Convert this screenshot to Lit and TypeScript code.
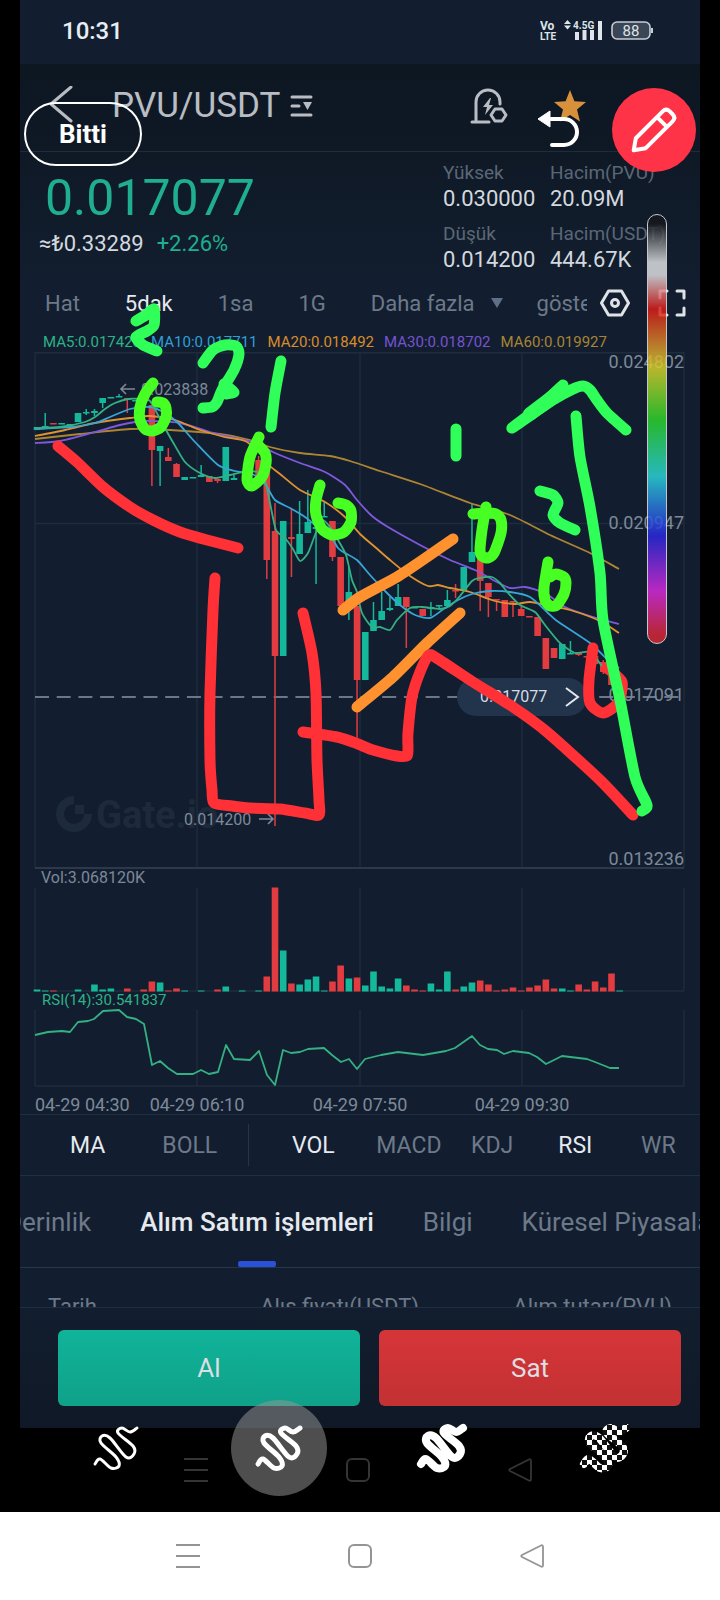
import { LitElement, html, svg, css } from "lit";
import { customElement } from "lit/decorators.js";
import { classMap } from "lit/directives/class-map.js";

type Pt = [number, number];

/** Smooth path through a list of points. */
function smooth(pts: Pt[], k = 0.12): string {
  let d = `M${pts[0][0]} ${pts[0][1]}`;
  for (let i = 0; i < pts.length - 1; i++) {
    const p0 = pts[Math.max(0, i - 1)];
    const p1 = pts[i];
    const p2 = pts[i + 1];
    const p3 = pts[Math.min(pts.length - 1, i + 2)];
    const a = [p1[0] + (p2[0] - p0[0]) * k, p1[1] + (p2[1] - p0[1]) * k];
    const b = [p2[0] - (p3[0] - p1[0]) * k, p2[1] - (p3[1] - p1[1]) * k];
    d += `C${a[0].toFixed(1)} ${a[1].toFixed(1)} ${b[0].toFixed(1)} ${b[1].toFixed(1)} ${p2[0]} ${p2[1]}`;
  }
  return d;
}

const parse = (s: string): Pt[] => s.trim().split(/\s+/).map((p) => p.split(",").map(Number) as Pt);

const candleX = (i: number) => 37 + i * 8.207;

/* index, up or down, body top, body bottom, high, low */
type Candle = [number, "u" | "d", number, number, number, number];
const candles: Candle[] = [
  [0, "u", 427, 430, 427, 430], [1, "u", 426, 428, 413, 428], [2, "d", 423, 424, 423, 424], [3, "u", 423, 424, 423, 424],
  [4, "u", 424, 425, 424, 425], [5, "u", 413, 422, 413, 422], [6, "u", 412, 413, 409, 415], [7, "u", 411, 413, 409, 416],
  [8, "u", 398, 403, 398, 408], [9, "u", 397, 398, 397, 398], [10, "u", 396, 397, 394, 397], [11, "d", 398, 400, 398, 413],
  [12, "u", 400, 401, 400, 401], [13, "u", 400, 401, 400, 401], [14, "d", 405, 450, 405, 486], [15, "u", 446, 451, 446, 486],
  [16, "d", 457, 461, 448, 461], [17, "d", 464, 477, 463, 477], [18, "u", 477, 480, 477, 480], [19, "u", 477, 478, 477, 478],
  [20, "u", 475, 477, 465, 477], [21, "d", 476, 482, 476, 482], [22, "d", 479, 481, 478, 483], [23, "u", 447, 481, 447, 481],
  [24, "u", 478, 480, 475, 480], [26, "u", 478, 479, 478, 479], [27, "d", 460, 478, 456, 478], [28, "d", 465, 560, 456, 579],
  [29, "d", 531, 656, 503, 826], [30, "u", 521, 656, 521, 656], [31, "d", 537, 539, 509, 577], [32, "u", 534, 554, 501, 554],
  [33, "u", 522, 533, 490, 533], [34, "u", 527, 529, 527, 584], [35, "u", 516, 517, 502, 517], [36, "d", 521, 557, 521, 561],
  [37, "d", 557, 606, 557, 606], [38, "u", 592, 607, 567, 620], [39, "d", 606, 680, 606, 738], [40, "u", 632, 680, 632, 680],
  [41, "u", 620, 631, 602, 631], [42, "u", 611, 620, 592, 620], [43, "u", 608, 610, 597, 611], [44, "u", 597, 606, 584, 606],
  [45, "d", 597, 607, 597, 648], [46, "u", 607, 608, 607, 608], [47, "d", 609, 616, 609, 616], [48, "u", 607, 609, 602, 616],
  [49, "u", 605, 606, 605, 609], [50, "u", 600, 606, 590, 606], [51, "d", 590, 591, 584, 598], [52, "u", 567, 591, 567, 591],
  [53, "u", 552, 562, 503, 562], [54, "d", 556, 581, 540, 611], [55, "d", 583, 597, 583, 617], [56, "d", 599, 600, 599, 611],
  [57, "d", 600, 617, 600, 617], [58, "d", 601, 602, 601, 617], [59, "d", 609, 616, 607, 616], [60, "d", 616, 617, 616, 617],
  [61, "d", 617, 636, 617, 636], [62, "d", 638, 669, 638, 669], [63, "d", 648, 658, 648, 658], [64, "u", 644, 659, 644, 659],
  [65, "u", 653, 654, 641, 654], [66, "d", 652, 655, 652, 656], [67, "d", 656, 657, 656, 657], [68, "d", 656, 664, 656, 664],
  [69, "d", 662, 672, 660, 674], [70, "d", 667, 685, 664, 685], [71, "d", 680, 697, 678, 700],
];

/* index, up or down, bar height */
const volumes: [number, "u" | "d", number][] = [
  [0, "u", 2], [1, "u", 1], [2, "d", 1], [5, "u", 2], [7, "u", 7], [8, "u", 2], [9, "u", 3], [11, "d", 3], [13, "d", 2],
  [14, "d", 10], [15, "u", 9], [16, "d", 1], [17, "d", 3], [18, "u", 1], [20, "u", 1], [22, "d", 2], [23, "u", 5],
  [25, "u", 1], [27, "u", 1], [28, "d", 15], [29, "d", 104], [30, "u", 41], [31, "d", 8], [32, "u", 7], [33, "u", 12],
  [34, "u", 15], [35, "u", 1], [36, "d", 10], [37, "d", 26], [38, "u", 13], [39, "d", 14], [40, "u", 6], [41, "u", 20],
  [42, "u", 5], [43, "u", 3], [44, "u", 13], [45, "d", 6], [46, "d", 2], [47, "d", 1], [48, "u", 8], [49, "u", 2],
  [50, "u", 20], [51, "d", 2], [52, "u", 5], [53, "u", 9], [54, "d", 11], [55, "d", 7], [56, "d", 1], [57, "d", 2],
  [58, "d", 4], [59, "d", 1], [60, "d", 4], [61, "d", 6], [62, "d", 12], [63, "d", 3], [64, "u", 3], [65, "u", 1],
  [66, "d", 7], [67, "d", 2], [68, "d", 10], [69, "d", 4], [70, "d", 18], [71, "u", 1],
];

const averages = [
  { cls: "ma60", pts: "35,439 80,434 130,429 170,430 220,434 250,440 270,447 300,453 330,456 350,461 380,471 420,484 470,503 510,515 550,535 590,553 619,569" },
  { cls: "ma30", pts: "35,443 60,441 95,432 120,425 145,421 180,423 210,432 235,438 255,443 275,453 300,463 325,472 345,485 357,500 372,516 388,527 420,545 450,560 475,570 495,581 510,588 525,587 545,593 565,607 590,616 619,624" },
  { cls: "ma20", pts: "35,436 65,430 95,423 130,418 150,416 175,420 200,430 225,437 245,441 262,454 270,466 280,474 300,490 325,502 345,517 360,534 375,547 390,560 410,576 428,586 438,585 450,588 470,592 495,601 515,604 530,602 550,606 570,610 600,621 619,633" },
  { cls: "ma10", pts: "35,429 70,427 95,423 110,417 130,409 150,407 165,413 178,423 195,442 218,465 235,471 252,474 265,484 275,500 290,508 305,517 320,529 330,535 338,548 345,553 357,560 370,575 385,591 400,605 415,615 430,618 445,608 458,600 472,594 490,591 510,592 530,597 547,612 557,621 590,643 608,660 619,668" },
  { cls: "ma5", pts: "35,428 60,427 85,422 95,417 105,409 115,403 128,399 142,399 150,401 158,415 166,430 174,444 185,462 200,473 215,478 230,475 243,472 258,472 265,480 270,503 276,530 285,538 293,549 300,561 308,553 315,535 322,520 330,527 338,540 346,555 352,580 357,592 362,613 372,627 380,627 390,630 397,620 410,608 422,607 440,609 450,606 460,596 472,581 480,578 492,577 500,583 508,593 520,605 535,612 545,625 560,643 575,653 590,652 603,667 619,682" },
];

const rsi =
  "35,1035 48,1032 62,1031 70,1032 78,1022 88,1021 94,1019 103,1011 119,1010 127,1017 136,1019 144,1024 152,1065 160,1061 168,1068 177,1074 193,1074 201,1070 209,1074 218,1072 226,1045 234,1059 250,1060 259,1051 267,1075 275,1085 283,1050 291,1053 300,1052 308,1049 324,1048 332,1055 341,1062 349,1059 357,1069 365,1059 381,1055 398,1052 423,1055 446,1051 455,1048 472,1036 480,1045 488,1049 497,1050 504,1054 513,1051 529,1053 537,1057 546,1064 562,1056 587,1059 595,1062 610,1068 619,1068";

@customElement("price-chart")
class PriceChart extends LitElement {
  static styles = css`
    :host { display: block; }
    svg { display: block; width: 100%; height: auto; font-family: Roboto, sans-serif; }
    .grid { stroke: #1f2c3d; stroke-width: 1.4; fill: none; }
    .frame { stroke: #2b394b; stroke-width: 2; }
    .dash { stroke: #8a94a2; stroke-width: 1.4; stroke-dasharray: 14 7.7; }
    .axis { fill: #7d8999; font-size: 18px; }
    .date { fill: #7d8999; font-size: 18px; }
    .tag { fill: #7d8999; font-size: 16px; }
    .rsi-tag { fill: #2db287; font-size: 15px; }
    .tip { fill: #d6dbe2; }
    .u { fill: #14b89b; stroke: #14b89b; }
    .d { fill: #e23c41; stroke: #e23c41; }
    .bar { stroke: none; }
    .wick { stroke-width: 1.5; }
    .ma { fill: none; stroke-width: 1.8; stroke-linejoin: round; }
    .ma5 { stroke: #34b083; }
    .ma10 { stroke: #37a5d6; }
    .ma20 { stroke: #e0922e; }
    .ma30 { stroke: #8058dd; }
    .ma60 { stroke: #ad8532; }
    .arrow { fill: none; stroke: #7d8999; stroke-width: 1.6; }
    .mark { fill: #1d2a3b; font-size: 38px; font-weight: 700; }
    .ring { fill: none; stroke: #1d2a3b; stroke-width: 8; }
    .pill { fill: #22334c; }
    .chev { fill: none; stroke: #e4e8ee; stroke-width: 2; }
  `;

  render() {
    const cols = [35, 197, 360, 522, 684];
    return html`<svg viewBox="20 351 680 763" role="img" aria-label="PVU/USDT">
      <path class="ring" d="M74 800a14 14 0 1 0 14 14" /><rect x="75" y="805" width="9" height="9" fill="#1d2a3b" />
      <text class="mark" x="96" y="828">Gate.io</text>
      ${cols.map((x) => svg`<path class="grid" d="M${x} 352V868M${x} 888V991M${x} 1010V1086" />`)}
      <path class="grid" d="M35 352.7H684M35 523.5H684M35 991H684M35 1086H684" />
      <path class="grid frame" d="M35 868H684" />
      <path class="dash" d="M35 697H685" />
      ${candles.map(([i, t, top, bottom, high, low]) => svg`
        <path class="wick ${t}" d="M${candleX(i)} ${high}V${low}" />
        <rect class="bar ${t}" x=${candleX(i) - 3.3} y=${top} width="6.6" height=${Math.max(1.5, bottom - top)} />`)}
      ${averages.map((a) => svg`<path class="ma ${a.cls}" d=${smooth(parse(a.pts))} />`)}
      ${volumes.map(([i, t, h]) => svg`<rect class="bar ${t}" x=${candleX(i) - 3.3} y=${991.5 - h} width="6.6" height=${h} />`)}
      <polyline class="ma ma5" points=${rsi} />
      <path class="arrow" d="M135 389H121M126 384l-5 5 5 5M259 819h14M268 814l5 5-5 5" />
      <text class="tag" x="141" y="395">0.023838</text>
      <text class="tag" x="184" y="825">0.014200</text>
      <text class="axis" x="684" y="368" text-anchor="end">0.024802</text>
      <text class="axis" x="684" y="529" text-anchor="end">0.020947</text>
      <text class="axis" x="684" y="701" text-anchor="end">0.017091</text>
      <text class="axis" x="684" y="865" text-anchor="end">0.013236</text>
      <rect class="pill" x="457" y="678" width="130" height="38" rx="19" />
      <text class="tag tip" x="480" y="702">0.017077</text>
      <path class="chev" d="M566 688l12 9-12 9" />
      <text class="tag" x="41" y="883">Vol:3.068120K</text>
      <text class="tag rsi-tag" x="42" y="1005">RSI(14):30.541837</text>
      <text class="date" x="35" y="1111">04-29 04:30</text>
      <text class="date" x="197" y="1111" text-anchor="middle">04-29 06:10</text>
      <text class="date" x="360" y="1111" text-anchor="middle">04-29 07:50</text>
      <text class="date" x="522" y="1111" text-anchor="middle">04-29 09:30</text>
    </svg>`;
  }
}

const strokes: { c: string; w?: number; pts: string }[] = [
  { c: "orange", pts: "453,539 427,557 397,577 360,597 343,610" },
  { c: "orange", pts: "460,613 427,643 393,677 357,707" },
  { c: "red", pts: "58,446 77,462 103,487 130,507 153,520 180,532 207,540 238,548" },
  { c: "red", pts: "215,578 213,610 210,693 210,760 212,790 214,803 232,806 250,808 280,809 305,813 319,815 319,800 317,760 316,693 312,653 303,613" },
  { c: "red", pts: "303,732 337,737 358,744 373,750 397,756 407,756 408,748 408,733 412,697 420,672 429,655 438,659 473,682 513,707 547,732 600,780 633,815" },
  { c: "red", pts: "593,648 589,680 590,703 603,713 618,703 622,682 607,668" },
  { c: "green", pts: "576,416 580,457 590,507 600,573 603,620 620,700 635,777 647,805 642,811" },
  { c: "green", pts: "563,385 538,408 512,428 553,400 573,389 583,386 590,390 597,400 607,413 626,430" },
  { c: "green", w: 12, pts: "559,392 530,414" },
  { c: "green", pts: "456,429 456,456" },
  { c: "green", pts: "540,491 553,495 558,503 553,515 560,523 575,530" },
  { c: "green", pts: "136,321 146,315 154,309 154,325 147,331 136,337 143,345 157,351" },
  { c: "green", pts: "203,363 213,350 225,345 236,346 239,354 234,370 222,390 217,402 212,407 203,408" },
  { c: "green", pts: "224,384 234,392 226,394" },
  { c: "green", pts: "281,361 275,393 271,427" },
  { c: "lime", pts: "153,383 145,394 140,407 140,420 145,429 152,431 161,427 166,417 166,408 163,403 157,402" },
  { c: "lime", pts: "259,437 250,457 247,480 252,486 262,477 266,463 265,453 258,445" },
  { c: "lime", pts: "320,485 316,500 316,515 322,529 332,535 344,532 351,522 351,511 346,505 338,503" },
  { c: "lime", pts: "486,507 482,530 480,550 482,556 488,558 494,553 501,533 501,520 496,514 486,513 473,514" },
  { c: "lime", pts: "548,562 544,587 545,600 550,606 557,605 564,594 566,583 564,577 556,574 550,577" },
];

const scribble = smooth(parse("27,64 32,59 43,68 51,66 48,57 33,43 34,36 42,38 58,57 66,54 65,46 50,33 54,28 62,32 69,28"), 0.17);

@customElement("app-root")
class AppRoot extends LitElement {
  static styles = css`
    :host { display: block; font-family: Roboto, sans-serif; background: #fff; }
    * { box-sizing: border-box; }
    button { font: inherit; color: inherit; background: none; border: 0; padding: 0; cursor: pointer; }
    svg { display: block; }
    .line { fill: none; stroke: currentColor; stroke-width: 3; stroke-linecap: round; stroke-linejoin: round; }

    .phone { position: relative; background: #000; padding: 0 20px; overflow: hidden; }
    .screen { background: #121e2f; color: #d3d8df; }

    .status { display: flex; align-items: center; height: 64px; padding: 0 46px 2px 42px; font-size: 24px; font-weight: 500; color: #e8edf3; }
    .status .time { flex: 1; }
    .head { display: flex; align-items: center; height: 88px; padding: 0 20px 4px 26px; background: linear-gradient(#0d1722, #0f1926); border-bottom: 1px solid #1f2c3d; color: #b9bdc3; }
    .title { display: flex; align-items: center; gap: 10px; flex: 1; margin: 0 0 0 36px; font-size: 35px; font-weight: 400; line-height: 40px; }
    .icons { display: flex; gap: 45px; margin-right: 93px; }

    .stats { display: flex; justify-content: space-between; padding: 9px 20px 7px 19px; background: linear-gradient(#0f1926, #121e2f); }
    .price { margin: 7px 0 0 6px; font-size: 50px; line-height: 60px; color: #1fae90; }
    .sub { display: flex; gap: 13px; font-size: 22px; line-height: 32px; }
    .up { color: #1fae90; }
    .figures { display: grid; grid-template-columns: 107px 130px; row-gap: 9px; margin: 0; }
    .figures dt { font-size: 19px; line-height: 24px; color: #5b6776; white-space: nowrap; }
    .figures dd { margin: 0; font-size: 22px; line-height: 28px; }

    .intervals { display: flex; align-items: center; height: 44px; padding: 0 14px 0 25px; font-size: 22px; color: #6d7989; white-space: nowrap; }
    .intervals button { margin-right: 45px; }
    .intervals .more { display: flex; align-items: center; gap: 16px; margin-right: 34px; }
    .intervals .cut { width: 50px; margin-right: 13px; overflow: hidden; text-align: left; }
    .intervals .icon { margin-right: 28px; color: #dfe3e8; }
    .intervals .icon:last-child { margin: 0; }
    .intervals .on { color: #e6eaef; }
    .legend { display: flex; gap: 10px; padding: 8px 23px 0; font-size: 15px; line-height: 18px; }
    .m5 { color: #2db287; } .m10 { color: #2f9fd6; } .m20 { color: #d98c2b; } .m30 { color: #7653cf; } .m60 { color: #a98434; }

    .indicators { display: flex; align-items: center; height: 62px; padding-left: 50px; border: solid #1f2f40; border-width: 1px 0; font-size: 23px; color: #6d7989; }
    .main { display: flex; gap: 57px; padding-right: 31px; }
    .side { display: grid; grid-template-columns: 13fr 10fr 10fr 10fr 10fr; flex: 1; height: 42px; padding-left: 10px; border-left: 1px solid #263547; }
    .indicators .on { color: #e6eaef; }

    .tabs { display: flex; gap: 49px; height: 92px; overflow: hidden; border-bottom: 1px solid #23364a; font-size: 26px; color: #6d7989; white-space: nowrap; }
    .tabs button { position: relative; flex: none; }
    .tabs button:first-child { margin-left: -15px; }
    .tabs .on { font-weight: 500; color: #e6eaef; }
    .tabs .on::after { content: ""; position: absolute; left: calc(50% - 19px); bottom: 0; width: 38px; height: 6px; border-radius: 2px; background: #2a52d8; }
    .orders { height: 39px; overflow: hidden; padding: 26px 28px 0; }
    table { width: 100%; border-collapse: collapse; table-layout: fixed; font-size: 22px; line-height: 26px; color: #6d7989; white-space: nowrap; }
    th { padding: 0; font-weight: 400; text-align: left; }
    th:first-child { width: 34%; }
    th:last-child { text-align: right; }
    .actions { display: grid; grid-template-columns: 1fr 1fr; gap: 19px; padding: 22px 19px 22px 38px; border-top: 1px solid #1f2f40; background: linear-gradient(#121e2f, #0f1826); }
    .actions button { height: 76px; border-radius: 6px; font-size: 26px; color: #dcdfe2; }
    .buy { background: linear-gradient(#10b499, #0fa189); }
    .sell { background: linear-gradient(#d63538, #c23133); }

    .keys { display: flex; justify-content: space-between; align-items: center; }
    .keys.dim { height: 84px; padding: 0 168px 0 164px; color: #353535; }
    .keys.light { height: 88px; padding: 0 176px; background: #fff; color: #949494; }

    .ink { position: absolute; left: 0; top: 0; width: 100%; pointer-events: none; }
    .ink path { fill: none; stroke-width: 11; stroke-linecap: round; stroke-linejoin: round; }
    .ink .wide { stroke-width: 14; }
    .red { stroke: #ff3136; } .green { stroke: #2fff58; } .lime { stroke: #48ff24; } .orange { stroke: #ff922f; }
    .done { position: absolute; left: 24px; top: 102px; width: 118px; height: 64px; border: 2px solid #fff; border-radius: 32px; font-size: 26px; font-weight: 700; color: #fff; }
    .undo { position: absolute; right: 138px; top: 106px; color: #fff; }
    .pen { position: absolute; right: 24px; top: 88px; width: 84px; height: 84px; border-radius: 50%; background: #ff3347; color: #fff; }
    .hue { position: absolute; right: 53px; top: 214px; width: 20px; height: 430px; margin: 0; appearance: none; writing-mode: vertical-lr; border: 1px solid #e8e8e8; border-radius: 10px;
      background: linear-gradient(#16191d 2%, #dfe1e4 11%, #dfe1e4 14%, #dc1c18 22%, #d8962c 31%, #d6d42c 36%, #2cd62c 48%, #2cd6da 61%, #2a28e0 75%, #da2cdc 88%, #d82838 98%); opacity: 0.84; }
    .hue::-webkit-slider-thumb { appearance: none; width: 1px; height: 1px; opacity: 0; }
    .tools { position: absolute; left: 0; right: 0; bottom: 16px; display: flex; justify-content: space-around; padding: 0 34px; }
    .tools button { width: 96px; height: 96px; border-radius: 50%; color: #fff; }
    .tools .picked { background: rgba(150, 150, 150, 0.52); }
    .tools path { fill: none; stroke: #fff; stroke-linecap: round; stroke-linejoin: round; }
    .tools .w1 { stroke-width: 3; } .tools .w2 { stroke-width: 5; } .tools .w3 { stroke-width: 8; }
    .tools .w4 { stroke-width: 8; stroke: url(#check); }
  `;

  private keyIcons() {
    return html`
      <button aria-label="Menü"><svg width="24" height="26" viewBox="0 0 24 26"><path d="M0 2h24M0 13h24M0 24h24" fill="none" stroke="currentColor" stroke-width="2" /></svg></button>
      <button aria-label="Ana ekran"><svg width="24" height="26" viewBox="0 0 24 26"><rect x="1" y="2" width="22" height="22" rx="5" fill="none" stroke="currentColor" stroke-width="2" /></svg></button>
      <button aria-label="Geri"><svg width="24" height="26" viewBox="0 0 24 26"><path d="M21 2.500Q23 1.500 23 4V22Q23 24.500 21 23.500L2 14Q0.500 13 2 12Z" fill="none" stroke="currentColor" stroke-width="1.800" /></svg></button>`;
  }

  render() {
    const tools = ["w1", "w2", "w3", "w4"];
    const names = ["İnce", "Orta", "Kalın", "Mozaik"];
    return html`
      <div class="phone">
        <main class="screen">
          <div class="status">
            <span class="time">10:31</span>
            <svg width="114" height="24" viewBox="540 19 114 24" font-family="Roboto, sans-serif" font-weight="700" fill="#dfe4ea">
              <text x="540" y="30" font-size="12">Vo</text>
              <text x="540" y="40" font-size="10">LTE</text>
              <path d="M564 24l3.500-4 3.500 4zM564 25.500l3.500 4 3.500-4z" />
              <text x="573" y="29" font-size="10">4.5G</text>
              <path d="M575 32h4v8h-4zM582.500 30h4v10h-4zM590 30h4v10h-4zM598 21h4v19h-4z" />
              <rect x="612" y="22" width="38" height="17" rx="5" fill="#3a4656" stroke="#c6ccd4" stroke-width="1.600" />
              <path d="M652 28v5" stroke="#c6ccd4" stroke-width="2" />
              <text x="631" y="36" font-size="15" font-weight="400" text-anchor="middle">88</text>
            </svg>
          </div>
          <header class="head">
            <button aria-label="Geri"><svg width="30" height="40" viewBox="0 0 30 40"><path class="line" d="M25 1L5 18l20 17" /></svg></button>
            <h1 class="title">PVU/USDT
              <svg width="23" height="24" viewBox="0 0 23 24"><path class="line" d="M2 3h19M2 12h7M2 21h19" /><path d="M13 8h9l-4.500 8z" fill="currentColor" /></svg>
            </h1>
            <div class="icons">
              <button aria-label="Alarm"><svg width="38" height="40" viewBox="0 0 38 40"><path class="line" d="M2 36h17M6 36V16a12 12 0 0 1 24 0v2" /><path d="M20 12l-7 9h4l-2 8 8-10h-4l2-7z" fill="currentColor" /><path class="line" d="M25 23h7l4 6-4 6h-7l-4-6z" /></svg></button>
              <button aria-label="Favori"><svg width="34" height="34" viewBox="0 0 34 34"><path fill="#d8903a" d="M17 1l4.400 11.200 11.600.7-9 7.600 3 11.900-10-6.500-10 6.500 3-11.900-9-7.600 11.600-.7z" /></svg></button>
            </div>
          </header>
          <section class="stats">
            <div>
              <div class="price">0.017077</div>
              <div class="sub"><span>≈₺0.33289</span><span class="up">+2.26%</span></div>
            </div>
            <dl class="figures">
              <div><dt>Yüksek</dt><dd>0.030000</dd></div>
              <div><dt>Hacim(PVU)</dt><dd>20.09M</dd></div>
              <div><dt>Düşük</dt><dd>0.014200</dd></div>
              <div><dt>Hacim(USDT)</dt><dd>444.67K</dd></div>
            </dl>
          </section>
          <nav class="intervals">
            <button>Hat</button><button class="on">5dak</button><button>1sa</button><button>1G</button>
            <button class="more">Daha fazla<svg width="12" height="10"><path d="M0 0h12L6 10z" fill="#5f6f87" /></svg></button>
            <button class="cut">göstergeler</button>
            <button class="icon" aria-label="Ayarlar"><svg width="30" height="28" viewBox="0 0 30 28"><path class="line" d="M8.500 2h13l7 12-7 12h-13l-7-12z" /><circle class="line" cx="15" cy="14" r="3.500" /></svg></button>
            <button class="icon" aria-label="Tam ekran"><svg width="28" height="28" viewBox="0 0 28 28"><path class="line" d="M2 9V2h7M19 2h7v7M26 19v7h-7M9 26H2v-7" /></svg></button>
          </nav>
          <div class="legend">
            <span class="m5">MA5:0.017420</span><span class="m10">MA10:0.017711</span><span class="m20">MA20:0.018492</span><span class="m30">MA30:0.018702</span><span class="m60">MA60:0.019927</span>
          </div>
          <price-chart></price-chart>
          <div class="indicators">
            <div class="main"><button class="on">MA</button><button>BOLL</button></div>
            <div class="side"><button class="on">VOL</button><button>MACD</button><button>KDJ</button><button class="on">RSI</button><button>WR</button></div>
          </div>
          <nav class="tabs">
            <button>Derinlik</button><button class="on">Alım Satım işlemleri</button><button>Bilgi</button><button>Küresel Piyasalar</button>
          </nav>
          <div class="orders">
            <table><thead><tr><th>Tarih</th><th>Alış fiyatı(USDT)</th><th>Alım tutarı(PVU)</th></tr></thead></table>
          </div>
          <div class="actions"><button class="buy">Al</button><button class="sell">Sat</button></div>
        </main>
        <div class="keys dim">${this.keyIcons()}</div>

        <svg class="ink" viewBox="0 0 720 1512" aria-hidden="true">
          ${strokes.map((s) => svg`<path class=${classMap({ [s.c]: true, wide: !!s.w })} d=${smooth(parse(s.pts))} />`)}
        </svg>
        <button class="done">Bitti</button>
        <button class="undo" aria-label="Geri al"><svg width="46" height="44" viewBox="0 0 46 44"><path d="M15 13h13a13 13 0 0 1 0 26H16" fill="none" stroke="#fff" stroke-width="4" stroke-linecap="round" /><path d="M2 13L14 5v16z" fill="#fff" stroke="#fff" stroke-linejoin="round" /></svg></button>
        <button class="pen" aria-label="Kalem"><svg width="84" height="84" viewBox="0 0 84 84"><g transform="translate(21 63) rotate(-45)" fill="none" stroke="#fff" stroke-width="4" stroke-linejoin="round"><path d="M1 0L11 -7H49Q54 -7 54 -2V2Q54 7 49 7H11Z M41 -7V7" /></g></svg></button>
        <input class="hue" type="range" min="0" max="100" aria-label="Renk" />
        <div class="tools">
          ${tools.map((t, i) => html`<button class=${classMap({ picked: i === 1 })} aria-label=${names[i]}>
            <svg width="96" height="96" viewBox="0 0 96 96">
              <defs><pattern id="check" width="10" height="10" patternUnits="userSpaceOnUse"><rect width="10" height="10" fill="#111" /><path d="M0 0h5v5H0zM5 5h5v5H5z" style="fill:#fff;stroke:none" /></pattern></defs>
              <path class=${t} d=${scribble} />
            </svg></button>`)}
        </div>
      </div>
      <div class="keys light">${this.keyIcons()}</div>
    `;
  }
}
